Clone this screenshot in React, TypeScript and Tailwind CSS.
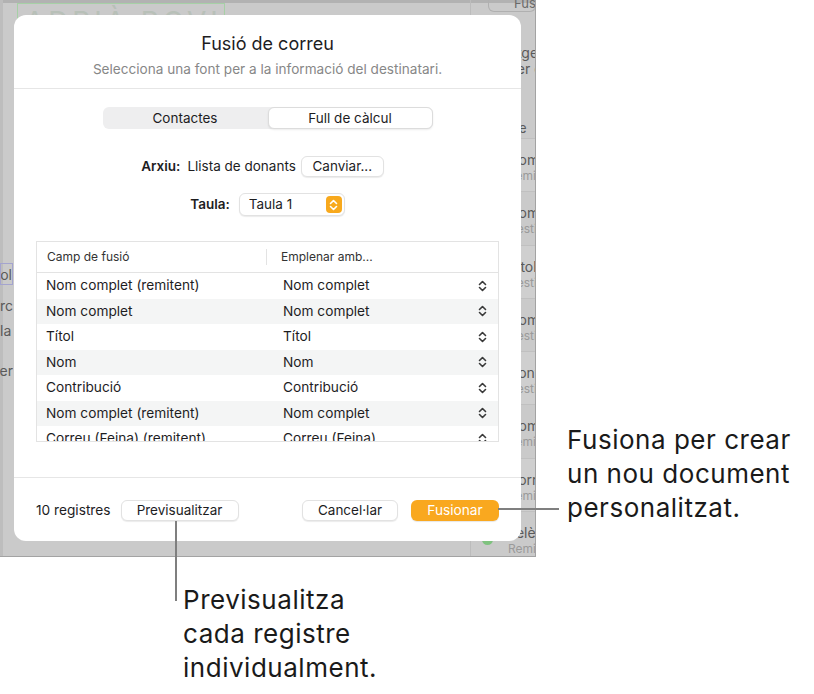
import React from 'react'

const rows: [string, string][] = [
  ['Nom complet (remitent)', 'Nom complet'],
  ['Nom complet', 'Nom complet'],
  ['Títol', 'Títol'],
  ['Nom', 'Nom'],
  ['Contribució', 'Contribució'],
  ['Nom complet (remitent)', 'Nom complet'],
  ['Correu (Feina) (remitent)', 'Correu (Feina)'],
]

const sideItems: [string, string][] = [
  ['Nom', 'Remitent'],
  ['Nom', 'Destinatari'],
  ['Títol', 'Destinatari'],
  ['Nom', 'Destinatari'],
  ['Contribució', 'Destinatari'],
  ['Nom', 'Remitent'],
  ['Correu', 'Remitent'],
  ['Telèfon', 'Remitent'],
]

const UpDown = ({ className = '' }: { className?: string }) => (
  <svg
    width="9"
    height="12"
    viewBox="0 0 9 12"
    fill="none"
    stroke="currentColor"
    strokeWidth="1.6"
    strokeLinecap="round"
    strokeLinejoin="round"
    className={className}
  >
    <path d="M1.5 4.5 4.5 1.5 7.5 4.5M1.5 7.5 4.5 10.5 7.5 7.5" />
  </svg>
)

const Button = ({ children, className = '' }: { children: React.ReactNode; className?: string }) => (
  <div
    className={`h-[21px] flex items-center justify-center rounded-[6px] bg-white text-[13.5px] text-[#1d1d1f] border border-[#e2e2e2] shadow-[0_1px_1px_rgba(0,0,0,0.08)] ${className}`}
  >
    {children}
  </div>
)

// dimmed app behind the sheet
const Backdrop = () => (
  <div className="absolute left-0 top-0 w-[536px] h-[557px] bg-[#cacaca] border-r border-b border-[#a3a3a3] overflow-hidden">
    <div className="h-[3px] bg-[#b2b2b2]" />
    <div className="absolute left-0 top-0 bottom-0 w-[3px] bg-[#bdbdbd]" />
    <div className="absolute left-[17px] top-[3px] w-[208px] h-[40px] border border-[#a6d0a6] overflow-hidden">
      <div className="pl-[7px] pt-[3px] text-[28px] leading-[30px] tracking-[0.14em] text-[#b8c0b8] whitespace-nowrap">
        ADRIÀ ROVIRA
      </div>
    </div>

    {/* left strip */}
    <div className="absolute left-0 top-[263px] w-[13px] flex flex-col text-[14px] text-[#5a5a5a]">
      <div className="h-[22px] flex justify-end items-center border border-[#a4a4cf] whitespace-nowrap overflow-hidden">Títol</div>
      <div className="h-[20px] mt-[10px] flex justify-start items-center whitespace-nowrap overflow-hidden">rc</div>
      <div className="h-[20px] mt-[5px] flex justify-start items-center whitespace-nowrap overflow-hidden">la</div>
      <div className="h-[20px] mt-[20px] flex justify-end items-center whitespace-nowrap overflow-hidden">Trier</div>
    </div>

    {/* right column */}
    <div className="absolute left-[470px] top-0 bottom-0 w-[66px] border-l border-[#bcbcbc]">
      <div className="ml-[17px] h-[12px] rounded-b-[6px] border border-t-0 border-[#b0b0b0] text-[13px] leading-[7px] text-[#6b6b6b] pl-[25px] overflow-hidden whitespace-nowrap">
        Fusionar
      </div>
      <div className="mt-[33px] pl-[22px] text-[14px] leading-[16px] text-[#5a5a5a] whitespace-nowrap">Imatge</div>
      <div className="pl-[37px] text-[14px] leading-[16px] text-[#5a5a5a] whitespace-nowrap">Per editar</div>
      <div className="mt-[40px] pl-[40px] h-[22px] text-[13px] leading-[22px] text-[#5a5a5a] whitespace-nowrap border-b border-[#bfbfbf]">
        de
      </div>
      <div className="flex flex-col">
        {sideItems.map(([a, b], i) => (
          <div
            key={i}
            className={`h-[53.3px] pl-[37px] pt-[12px] border-b border-[#c0c0c0] whitespace-nowrap ${i % 2 === 0 ? 'bg-[#cfcfcf]' : 'bg-[#cacaca]'}`}
          >
            <div className="text-[14px] leading-[17px] text-[#5a5a5a]">{a}</div>
            <div className="text-[12px] leading-[15px] text-[#9a9a9a]">{b}</div>
          </div>
        ))}
      </div>
      <div className="absolute left-[11px] top-[534px] w-[11px] h-[11px] rounded-full bg-[#7fc27f]" />
    </div>
  </div>
)

const Dialog = () => (
  <div className="absolute left-[14px] top-[15px] w-[507px] h-[526px] bg-white rounded-[12px] flex flex-col">
    <div className="mt-[18px] text-center text-[18px] leading-[22px] text-[#1d1d1f]">Fusió de correu</div>
    <div className="mt-[5px] text-center text-[13.6px] leading-[18px] text-[#878787]">
      Selecciona una font per a la informació del destinatari.
    </div>
    <div className="mt-[10px] h-px bg-[#e6e6e6]" />

    <div className="mt-[18px] self-center w-[330px] h-[22px] rounded-[6px] bg-[#eeeeef] flex text-[13.5px] text-[#1d1d1f]">
      <div className="w-[165px] flex items-center justify-center">Contactes</div>
      <div className="flex-1 flex items-center justify-center bg-white rounded-[6px] border border-[#dcdcdc] shadow-[0_1px_2px_rgba(0,0,0,0.08)]">
        Full de càlcul
      </div>
    </div>

    <div className="mt-[27px] pr-[10px] flex items-center justify-center text-[13.5px] text-[#1d1d1f]">
      <span className="font-semibold">Arxiu:</span>
      <span className="ml-[7px]">Llista de donants</span>
      <Button className="ml-[5px] w-[83px]">Canviar...</Button>
    </div>

    <div className="mt-[16px] flex items-center justify-center text-[13.5px] text-[#1d1d1f]">
      <span className="font-semibold">Taula:</span>
      <div className="ml-[9px] w-[106px] h-[23px] flex items-center justify-between pl-[9px] pr-[2px] rounded-[6px] bg-white border border-[#e2e2e2] shadow-[0_1px_1px_rgba(0,0,0,0.08)]">
        <span>Taula 1</span>
        <div className="w-[16px] h-[17px] rounded-[4px] bg-[#f8a91d] flex items-center justify-center text-white">
          <UpDown />
        </div>
      </div>
    </div>

    <div className="mt-[25px] mx-[22px] h-[201px] border border-[#e3e3e3] overflow-hidden">
      <div className="h-[31px] flex items-center border-b border-[#e3e3e3] text-[12px] text-[#333]">
        <div className="w-[230px] pl-[10px] flex items-center justify-between">
          <span>Camp de fusió</span>
          <div className="w-px h-[16px] bg-[#e3e3e3]" />
        </div>
        <span className="pl-[14px]">Emplenar amb...</span>
      </div>
      {rows.map(([a, b], i) => (
        <div
          key={i}
          className={`h-[25.5px] flex items-center text-[13.7px] text-[#1d1d1f] whitespace-nowrap ${i % 2 === 1 ? 'bg-[#f4f5f5]' : 'bg-white'}`}
        >
          <div className="w-[246px] pl-[9px]">{a}</div>
          <div className="flex-1">{b}</div>
          <UpDown className="mr-[11px] text-[#3a3a3a]" />
        </div>
      ))}
    </div>

    <div className="mt-[35px] h-px bg-[#e6e6e6]" />

    <div className="mt-[22px] px-[22px] flex items-center text-[13.7px] text-[#1d1d1f]">
      <span>10 registres</span>
      <Button className="ml-[10px] w-[118px]">Previsualitzar</Button>
      <Button className="ml-auto w-[96px]">Cancel·lar</Button>
      <div className="ml-[13px] w-[88px] h-[21px] rounded-[6px] bg-[#f9a81f] flex items-center justify-center text-white shadow-[0_1px_1px_rgba(0,0,0,0.1)]">
        Fusionar
      </div>
    </div>
  </div>
)

export default function App() {
  return (
    <div className="relative w-[814px] h-[694px] bg-white overflow-hidden font-['Inter','Liberation_Sans',sans-serif]">
      <Backdrop />
      <Dialog />

      {/* callouts */}
      <div className="absolute left-[175px] top-[521px] w-[2px] h-[80px] bg-[#7f7f7f]" />
      <div className="absolute left-[183px] top-[583px] text-[26px] leading-[34px] tracking-[0.02em] text-[#1a1a1a] whitespace-nowrap">
        <div>Previsualitza</div>
        <div>cada registre</div>
        <div>individualment.</div>
      </div>

      <div className="absolute left-[498px] top-[508px] w-[61px] h-[2px] bg-[#7f7f7f]" />
      <div className="absolute left-[567px] top-[423px] text-[26px] leading-[34px] tracking-[0.02em] text-[#1a1a1a] whitespace-nowrap">
        <div>Fusiona per crear</div>
        <div>un nou document</div>
        <div>personalitzat.</div>
      </div>
    </div>
  )
}
